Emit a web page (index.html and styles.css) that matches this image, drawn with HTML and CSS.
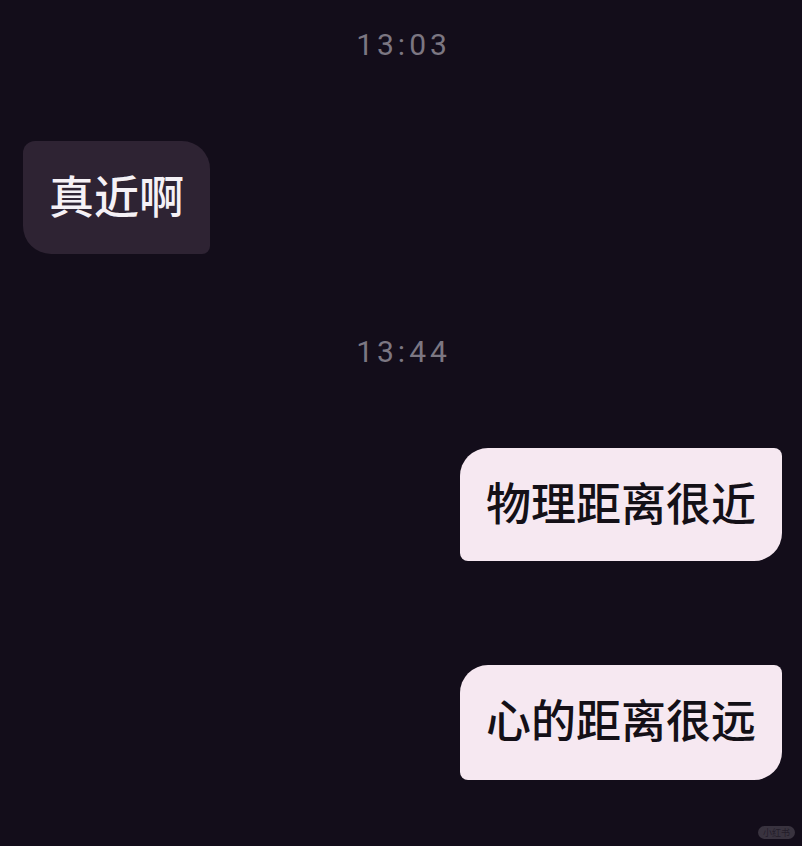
FILE: index.html
```html
<!DOCTYPE html>
<html lang="zh-CN">
<head>
    <meta charset="UTF-8">
    <meta name="viewport" content="width=device-width, initial-scale=1.0">
    <title>Chat</title>
    <link rel="stylesheet" href="styles.css">
</head>
<body>

    <div class="chat">
        <p class="time first">13:03</p>

        <div class="row left">
            <div class="bubble them">真近啊</div>
        </div>

        <p class="time">13:44</p>

        <div class="row right">
            <div class="bubble me">物理距离很近</div>
        </div>

        <div class="row right gap">
            <div class="bubble me tall">心的距离很远</div>
        </div>
    </div>

    <div class="mark">小红书</div>

</body>
</html>
```

FILE: styles.css
```css
* {
    margin: 0;
    padding: 0;
    box-sizing: border-box;
}

body {
    background: #130d1a;
    width: 802px;
    height: 846px;
    overflow: hidden;
    position: relative;
    font-family: "Noto Sans CJK SC", "Noto Sans", sans-serif;
}

.chat {
    display: flex;
    flex-direction: column;
    padding: 0 20px 0 23px;
}

/* Timestamps */
.time {
    font-family: Roboto, "Noto Sans", sans-serif;
    font-size: 30px;
    line-height: 40px;
    letter-spacing: 4px;
    color: #7c7782;
    text-align: center;
    padding-left: 2px;
    margin-top: 78px;
}

.time.first {
    margin-top: 25px;
}

.row {
    display: flex;
    margin-top: 76px;
}

.row.left {
    justify-content: flex-start;
}

.row.right {
    justify-content: flex-end;
}

.row.gap {
    margin-top: 104px;
}

/* Bubbles */
.bubble {
    font-size: 45px;
    font-weight: 500;
    line-height: 63px;
    padding: 22px 26px 28px;
    white-space: nowrap;
}

.bubble.tall {
    padding-bottom: 30px;
}

.them {
    background: #2e2333;
    color: #f5f1f6;
    border-radius: 12px 28px 8px 28px;
}

.me {
    background: #f6e8f1;
    color: #141017;
    border-radius: 28px 8px 28px 8px;
}

/* Watermark */
.mark {
    position: absolute;
    right: 7px;
    bottom: 7px;
    padding: 0 5px;
    font-size: 9px;
    line-height: 13px;
    color: #2a2430;
    background: #4a4450;
    border-radius: 7px;
    opacity: 0.7;
}
```
